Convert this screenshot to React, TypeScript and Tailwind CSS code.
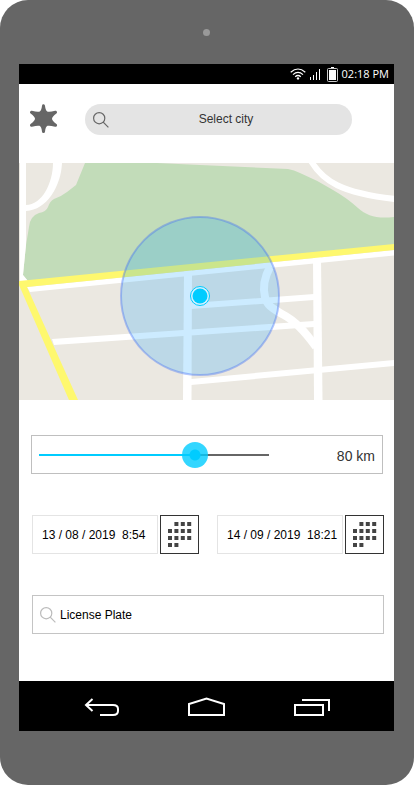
import { useState } from "react";

function SearchIcon({ className }: { className: string }) {
  return (
    <svg viewBox="0 0 16 16" fill="none" stroke="currentColor" strokeWidth="1.2" className={className} aria-hidden="true">
      <circle cx="6.2" cy="6.2" r="5.6" />
      <path d="M10.2 10.2 L15.4 15.4" />
    </svg>
  );
}

function StatusBar() {
  return (
    <div className="flex h-5 items-center justify-end bg-black pr-[5px] text-white">
      <svg viewBox="0 0 16 12" className="h-3 w-4" fill="none" stroke="#fff" strokeWidth="1.2" aria-hidden="true">
        <path d="M0.7 4.2 Q8 -2.2 15.3 4.2" />
        <path d="M3 6.6 Q8 2.2 13 6.6" />
        <path d="M5.2 8.8 Q8 6.2 10.8 8.8" />
        <circle cx="8" cy="10.4" r="1.2" fill="#fff" stroke="none" />
      </svg>
      <svg viewBox="0 0 11 12" className="ml-1 h-3 w-[11px]" fill="#fff" aria-hidden="true">
        <rect x="0" y="9" width="1" height="3" />
        <rect x="3" y="7" width="1" height="5" />
        <rect x="6" y="4" width="1" height="8" />
        <rect x="9" y="1" width="1" height="11" />
      </svg>
      <svg viewBox="0 0 11 15" className="ml-1.5 h-[15px] w-[11px]" aria-hidden="true">
        <rect x="4" y="0" width="3" height="2" fill="#fff" />
        <rect x="0.5" y="1.5" width="10" height="13" rx="1" fill="none" stroke="#ccc" />
        <rect x="2" y="3" width="7" height="10" fill="#fff" />
      </svg>
      <span className="ml-1 font-['Open_Sans',sans-serif] text-[11px] leading-5">02:18 PM</span>
    </div>
  );
}

function CityMap() {
  return (
    <svg viewBox="0 0 375 237" className="block w-full" role="img" aria-label="Map">
      <rect width="375" height="237" fill="#ebe8e1" />
      <path
        d="M66 0 L138 0 L181 2 L269 6 Q275 7 281 10 Q298 17 314 27 Q328 35 339 45 C348 53 358 56 375 54 V84 L0 121 L8 117 L4 112 L7 82 L10 64 Q11 53 20 50 Q27 49 29 44 Q31 38 35 36 Q43 33 48 29 L57 22 Z"
        fill="#c2dcb9"
      />
      <g fill="#fff">
        <path d="M1 0 H7 V82 L4 112 L9 118 L1 119 Z" />
        <path d="M43 0 C42 23 28 47 7 48 L7 42 C23 42 34 20 34 0 Z" />
        <path d="M8 124 L375 87 V92.5 L11 129 Z" />
        <path d="M165 106 H173 L172.5 237 H164 Z" />
        <path d="M294 94 H302 L303.5 237 H295 Z" />
        <path d="M172 140 L295 131 V137 L172 146 Z" />
        <path d="M33 176 L295 158 V164 L35 182 Z" />
        <path d="M172 216 L375 197 V203 L172 222 Z" />
      </g>
      <g fill="none" stroke="#fff">
        <path d="M292 -2 C304 18 322 30 376 36" strokeWidth="6" />
        <path d="M251 104 C245 115 244 126 246 134 C248 144 257 147 263 151 C277 158 287 170 297 184" strokeWidth="8" />
      </g>
      <path d="M0 118 L375 81 V87 L8 124 L59 237 H50 L0 122 Z" fill="#fef86e" />
      <circle cx="181" cy="133" r="79" fill="#0099ff" fillOpacity="0.2" stroke="#4470f4" strokeOpacity="0.4" strokeWidth="2" />
      <circle cx="181" cy="133" r="9.5" fill="#d5f0ff" stroke="#00ccff" />
      <circle cx="181" cy="133" r="7.5" fill="#00ccff" />
    </svg>
  );
}

function DistanceSlider() {
  const min = 10;
  const max = 110;
  const [distance, setDistance] = useState(80);
  const ratio = (distance - min) / (max - min);
  const stop = `calc(13px + (100% - 26px) * ${ratio})`;
  return (
    <div className="mr-[11px] ml-3 flex h-[39px] items-center justify-between border border-[#bfbfbf] px-[7px]">
      <input
        id="distance"
        type="range"
        aria-label="Distance"
        min={min}
        max={max}
        value={distance}
        onChange={(e) => setDistance(Number(e.target.value))}
        style={{ backgroundImage: `linear-gradient(to right, #00ccff ${stop}, #666666 ${stop})` }}
        className="h-[26px] w-[230px] appearance-none bg-transparent bg-[length:100%_2px] bg-center bg-no-repeat [&::-webkit-slider-thumb]:size-[26px] [&::-webkit-slider-thumb]:appearance-none [&::-webkit-slider-thumb]:rounded-full [&::-webkit-slider-thumb]:bg-[radial-gradient(circle,#00ccff_5px,rgba(0,204,255,0.8)_6px)]"
      />
      <output htmlFor="distance" className="pt-[3px] text-sm leading-4 text-[#333]">
        {distance} km
      </output>
    </div>
  );
}

const calendarDots = [
  [1, 0], [2, 0], [3, 0],
  [0, 1], [1, 1], [2, 1], [3, 1],
  [0, 2], [1, 2], [2, 2], [3, 2],
  [0, 3], [1, 3],
];

function DateField({ label, initial }: { label: string; initial: string }) {
  return (
    <div className="flex min-w-0 flex-1 gap-0.5">
      <input
        type="text"
        aria-label={label}
        defaultValue={initial}
        className="h-[39px] min-w-0 flex-1 border border-[#e4e4e4] bg-white pl-[9px] text-xs text-black"
      />
      <button type="button" aria-label={`Pick ${label}`} className="flex size-[39px] items-center justify-center border border-[#333]">
        <svg viewBox="0 0 24 26" className="h-[26px] w-6" fill="#444" aria-hidden="true">
          {calendarDots.map(([col, row]) => (
            <rect key={`${col}-${row}`} x={col * 6.4} y={row * 7} width="4" height="4" />
          ))}
        </svg>
      </button>
    </div>
  );
}

function NavBar() {
  return (
    <nav className="flex h-[50px] items-center justify-center gap-[67px] bg-black pt-0.5">
      <button type="button" aria-label="Back">
        <svg viewBox="0 0 36 20" className="block h-5 w-9" fill="none" stroke="#fff" strokeWidth="2">
          <path d="M8.5 2 L2 8 L8.5 14" />
          <path d="M2 8 H29 Q34 8 34 12 V14 Q34 18 29 18 H16" />
        </svg>
      </button>
      <button type="button" aria-label="Home">
        <svg viewBox="0 0 39 20" className="block h-5 w-[39px]" fill="none" stroke="#fff" strokeWidth="2">
          <path d="M2 18 V7 L19.5 1.5 L37 7 V18 Z" />
        </svg>
      </button>
      <button type="button" aria-label="Recent apps">
        <svg viewBox="0 0 37 20" className="block h-5 w-[37px]" fill="none" stroke="#fff" strokeWidth="2">
          <rect x="2" y="8" width="28" height="10" />
          <path d="M9 3 H36 V14" />
        </svg>
      </button>
    </nav>
  );
}

export default function App() {
  return (
    <div className="bg-white font-['Liberation_Sans',Arial,sans-serif]">
      <div className="rounded-[28px] bg-[#666] pr-5 pb-[54px] pl-[19px]">
        <div className="flex h-16 items-center justify-center">
          <div className="size-[7px] rounded-full bg-[#999]" />
        </div>
        <div className="bg-white">
          <StatusBar />
          <header className="flex items-start pt-5 pr-[42px] pb-7 pl-[11px]">
            <button type="button" aria-label="Settings">
              <svg viewBox="0 0 28 30" className="block h-[30px] w-7" fill="#666" stroke="#666" strokeWidth="3" strokeLinejoin="round">
                <path d="M13.5 1.8 Q14.2 8 17 9 Q19.5 9.8 25.5 8.3 Q20.5 12 20.5 14.7 Q20.5 17.4 25.5 21.3 Q19.5 19.6 17 20.4 Q14.2 21.4 13.5 27.6 Q12.8 21.4 10 20.4 Q7.5 19.6 1.5 21.3 Q6.5 17.4 6.5 14.7 Q6.5 12 1.5 8.3 Q7.5 9.8 10 9 Q12.8 8 13.5 1.8 Z" />
              </svg>
            </button>
            <label className="ml-[27px] flex h-[31px] min-w-0 flex-1 items-center rounded-full bg-[#e4e4e4] pr-[9px] pl-2">
              <SearchIcon className="size-4 shrink-0 text-[#666]" />
              <input
                type="text"
                aria-label="Select city"
                placeholder="Select city"
                className="h-[31px] min-w-0 flex-1 bg-transparent pb-px text-center text-xs text-[#333] placeholder:text-[#333] placeholder:opacity-100"
              />
            </label>
          </header>
          <CityMap />
          <main className="flex flex-col pt-[35px] pb-[47px]">
            <DistanceSlider />
            <div className="mt-[41px] mr-[10px] ml-[13px] flex gap-[18px]">
              <DateField label="start date" initial="13 / 08 / 2019  8:54" />
              <DateField label="end date" initial="14 / 09 / 2019  18:21" />
            </div>
            <label className="mt-[41px] mr-[10px] ml-[13px] flex h-[39px] items-center gap-1 border border-[#c4c4c4] px-[7px]">
              <SearchIcon className="size-4 shrink-0 text-[#bbb]" />
              <input
                type="text"
                aria-label="License Plate"
                placeholder="License Plate"
                className="min-w-0 flex-1 bg-transparent text-xs text-black placeholder:text-black placeholder:opacity-100"
              />
            </label>
          </main>
          <NavBar />
        </div>
      </div>
    </div>
  );
}
